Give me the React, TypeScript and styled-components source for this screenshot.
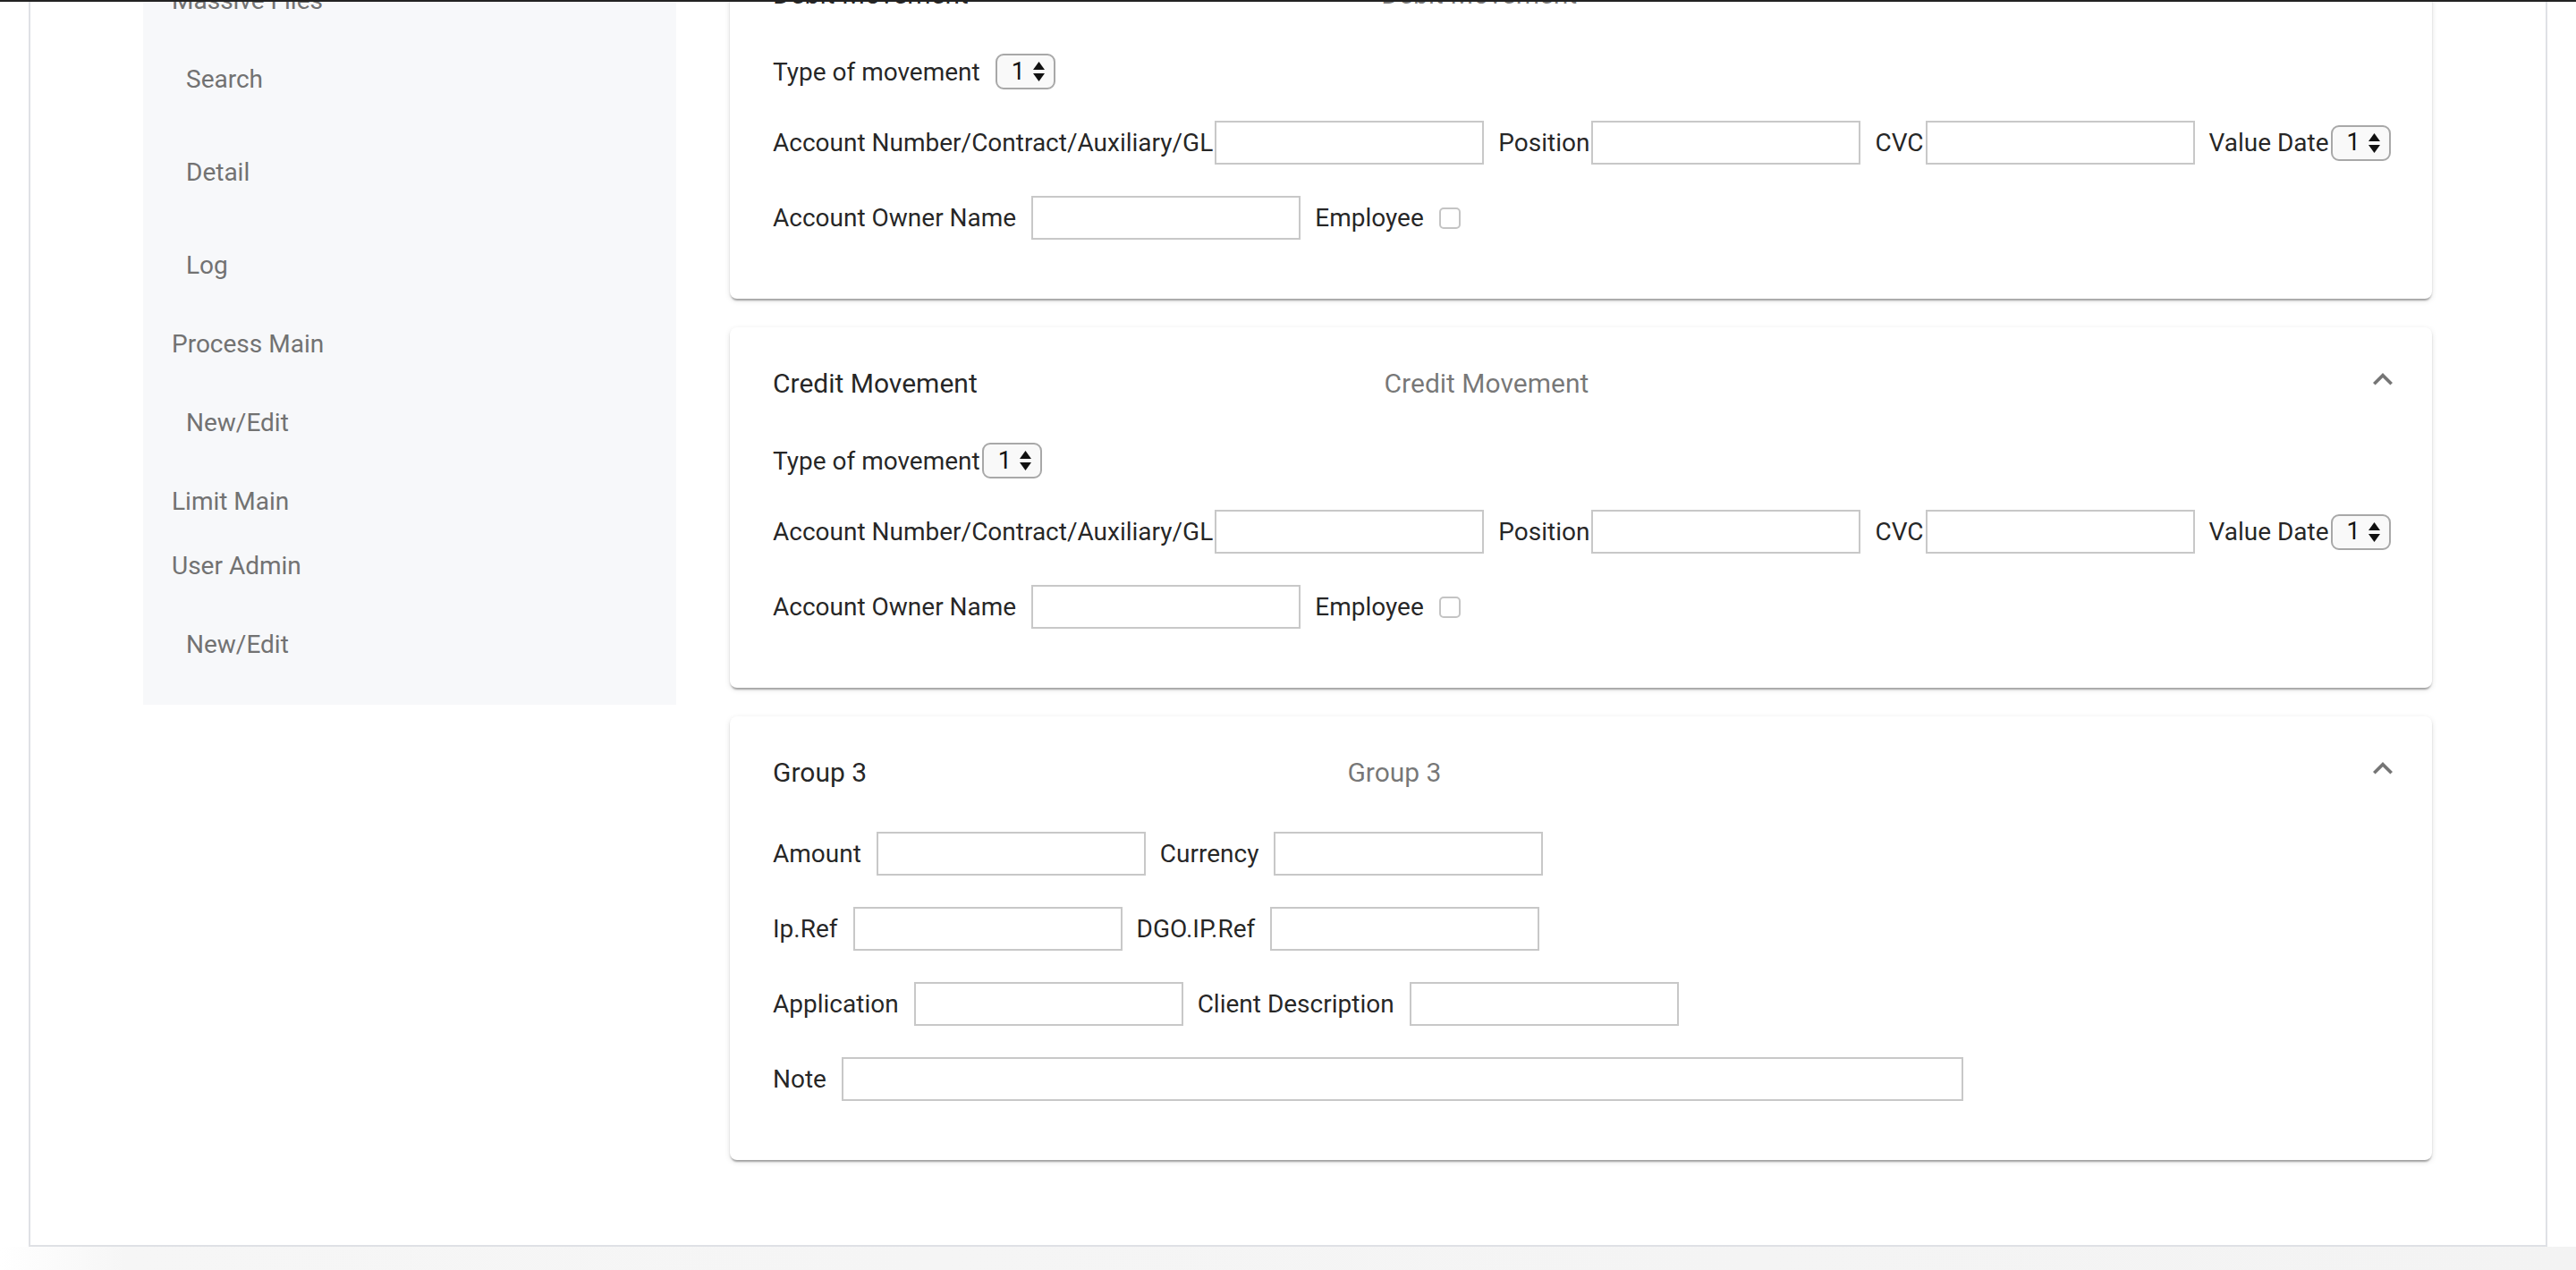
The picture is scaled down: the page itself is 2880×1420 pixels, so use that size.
import styled, { createGlobalStyle } from "styled-components";

const GlobalStyle = createGlobalStyle`
  html, body {
    margin: 0;
    padding: 0;
    height: 100%;
  }
  body {
    overflow: hidden;
    background: #ffffff;
    font-family: Roboto, "Liberation Sans", Arial, sans-serif;
    -webkit-font-smoothing: antialiased;
  }
  * {
    box-sizing: border-box;
  }
`;

interface NavEntry {
  label: string;
  sub?: boolean;
}

const navEntries: NavEntry[] = [
  { label: "Massive Files" },
  { label: "Search", sub: true },
  { label: "Detail", sub: true },
  { label: "Log", sub: true },
  { label: "Process Main" },
  { label: "New/Edit", sub: true },
  { label: "Limit Main" },
  { label: "User Admin" },
  { label: "New/Edit", sub: true },
];

function ExpandIcon() {
  return (
    <Chevron viewBox="6 8 12 7.41" aria-hidden="true">
      <path d="M12 8l-6 6 1.41 1.41L12 10.83l4.59 4.58L18 14z" />
    </Chevron>
  );
}

function NumberSelect() {
  return (
    <SelectBox>
      <span>1</span>
      <svg width="13" height="22" viewBox="0 0 13 22" aria-hidden="true">
        <path d="M6.5 0L13 9H0z" />
        <path d="M0 13h13l-6.5 9z" />
      </svg>
    </SelectBox>
  );
}

interface PanelProps {
  title: string;
  children: React.ReactNode;
}

function Panel({ title, children }: PanelProps) {
  return (
    <Card>
      <PanelHeader>
        <Heading>{title}</Heading>
        <SecondaryHeading>{title}</SecondaryHeading>
        <HeaderFiller />
      </PanelHeader>
      <ExpandButton>
        <ExpandIcon />
      </ExpandButton>
      <PanelBody>{children}</PanelBody>
    </Card>
  );
}

function MovementFields({ tightType }: { tightType?: boolean }) {
  return (
    <>
      <FieldRow>
        <Label $tight={tightType}>Type of movement</Label>
        <NumberSelect />
      </FieldRow>
      <FieldRow>
        <Label $tight>Account Number/Contract/Auxiliary/GL</Label>
        <TextInput />
        <Label $tight>Position</Label>
        <TextInput />
        <Label $tight>CVC</Label>
        <TextInput />
        <Label $tight>Value Date</Label>
        <NumberSelect />
      </FieldRow>
      <FieldRow>
        <Label>Account Owner Name</Label>
        <TextInput />
        <Label>Employee</Label>
        <CheckBox />
      </FieldRow>
    </>
  );
}

function App() {
  return (
    <>
      <GlobalStyle />
      <TopBar />
      <Frame>
        <Sidebar>
          {navEntries.map((entry, i) =>
            entry.sub ? (
              <NavLink key={i}>{entry.label}</NavLink>
            ) : (
              <NavTitle key={i}>{entry.label}</NavTitle>
            )
          )}
        </Sidebar>
        <Cards>
          <Panel title="Debit Movement">
            <MovementFields />
          </Panel>
          <Panel title="Credit Movement">
            <MovementFields tightType />
          </Panel>
          <Panel title="Group 3">
            <FieldRow>
              <Label>Amount</Label>
              <TextInput />
              <Label>Currency</Label>
              <TextInput />
            </FieldRow>
            <FieldRow>
              <Label>Ip.Ref</Label>
              <TextInput />
              <Label>DGO.IP.Ref</Label>
              <TextInput />
            </FieldRow>
            <FieldRow>
              <Label>Application</Label>
              <TextInput />
              <Label>Client Description</Label>
              <TextInput />
            </FieldRow>
            <FieldRow>
              <Label>Note</Label>
              <TextInput $width={1254} />
            </FieldRow>
          </Panel>
        </Cards>
      </Frame>
      <Floor />
    </>
  );
}

const TopBar = styled.div`
  position: fixed;
  top: 0;
  left: 0;
  right: 0;
  height: 2px;
  background: #222222;
  z-index: 10;
`;

const Frame = styled.main`
  margin: -103px 32px 0;
  border: 2px solid #dfe1e5;
  background: #ffffff;
  padding: 32px 127px 95px 126px;
  display: grid;
  grid-template-columns: 596px minmax(0, 1fr);
  column-gap: 60px;
  align-items: start;
`;

const Floor = styled.div`
  height: 60px;
  background: linear-gradient(to right, #ffffff 0, #f6f6f6 140px, #f3f3f3 100%);
`;

const Sidebar = styled.nav`
  background: #f7f8fa;
  padding: 33px 0 16px;
  display: flex;
  flex-direction: column;
`;

const NavTitle = styled.div`
  height: 72px;
  display: flex;
  align-items: center;
  padding-left: 32px;
  font-size: 28px;
  color: #727272;
`;

const NavLink = styled(NavTitle)`
  height: 104px;
  padding-left: 48px;
`;

const Cards = styled.div`
  display: flex;
  flex-direction: column;
  gap: 32px;
`;

const Card = styled.section`
  position: relative;
  background: #ffffff;
  border-radius: 8px;
  box-shadow: 0 4px 2px -2px rgba(0, 0, 0, 0.2), 0 2px 2px 0 rgba(0, 0, 0, 0.14),
    0 2px 6px 0 rgba(0, 0, 0, 0.12);
`;

const PanelHeader = styled.div`
  height: 124px;
  display: flex;
  align-items: center;
  padding: 0 33px 0 48px;
  font-size: 30px;
  > * {
    flex: 1 1 auto;
  }
`;

const Heading = styled.div`
  color: rgba(0, 0, 0, 0.87);
  white-space: nowrap;
`;

const SecondaryHeading = styled.div`
  color: rgba(0, 0, 0, 0.54);
  white-space: nowrap;
`;

const HeaderFiller = styled.div``;

const ExpandButton = styled.div`
  position: absolute;
  top: 51px;
  right: 44px;
  display: flex;
`;

const Chevron = styled.svg`
  width: 22px;
  height: 13.6px;
  fill: rgba(0, 0, 0, 0.54);
`;

const PanelBody = styled.div`
  padding: 5px 48px 66px;
  display: flex;
  flex-direction: column;
  gap: 35px;
`;

const FieldRow = styled.div`
  display: flex;
  align-items: center;
  font-size: 28px;
  line-height: 33px;
  color: rgba(0, 0, 0, 0.87);
  > :last-child {
    margin-right: 0;
  }
`;

const Label = styled.label<{ $tight?: boolean }>`
  white-space: nowrap;
  margin-right: ${(p) => (p.$tight ? "2px" : "17px")};
`;

const TextInput = styled.input.attrs({ type: "text" })<{ $width?: number }>`
  flex: none;
  width: ${(p) => p.$width ?? 301}px;
  height: 49px;
  margin: 0 16px 0 0;
  border: 2px solid #c8c8c8;
  border-radius: 0;
  background: #ffffff;
  font: inherit;
  padding: 0 8px;
  outline: none;
`;

const SelectBox = styled.div`
  flex: none;
  width: 67px;
  height: 40px;
  margin-right: 16px;
  display: flex;
  align-items: center;
  justify-content: space-between;
  padding: 0 10px 0 16px;
  border: 2px solid #a8a8a8;
  border-radius: 9px;
  background: #f9f9f9;
  font-size: 27px;
  color: #111111;
  svg {
    fill: #111111;
  }
`;

const CheckBox = styled.span`
  flex: none;
  width: 24px;
  height: 24px;
  border: 2px solid #c4c4c4;
  border-radius: 5px;
  background: #ffffff;
`;

export default App;
